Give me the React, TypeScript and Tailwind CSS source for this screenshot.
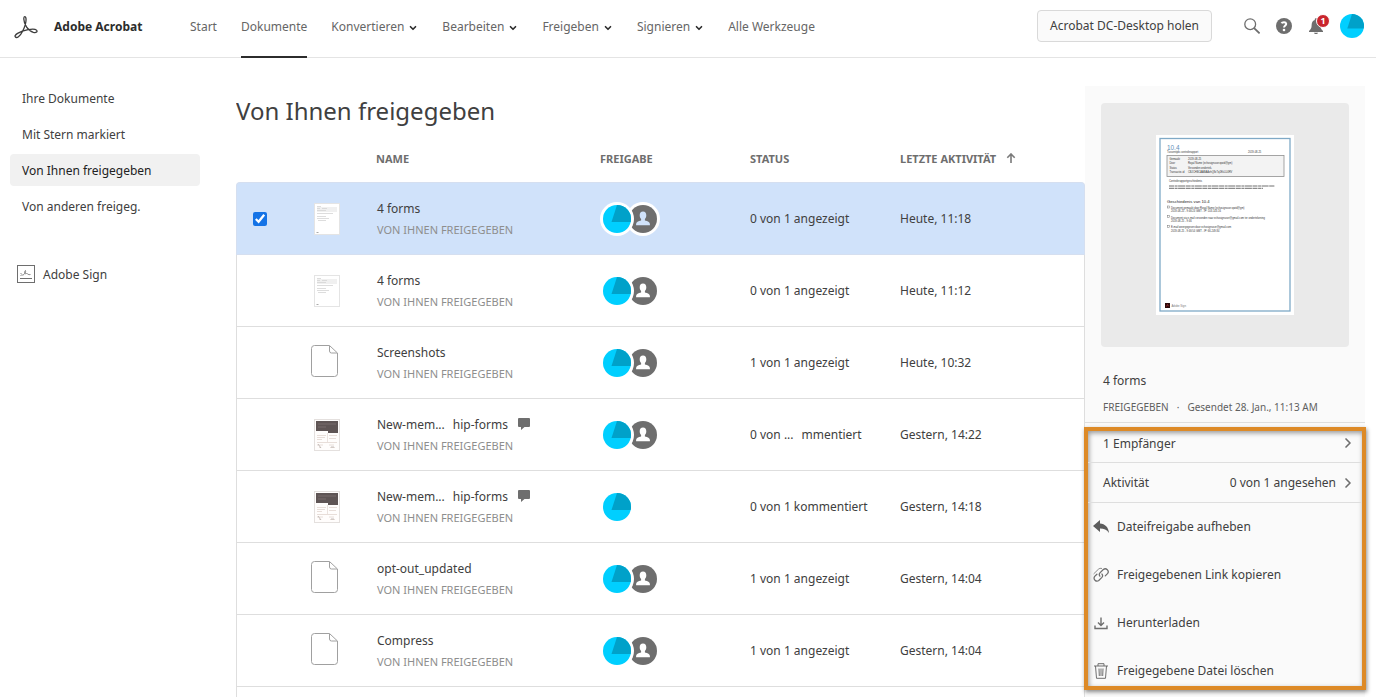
import React from "react";
import { ChevronDown, ChevronRight } from "lucide-react";

const NAV = [
  { label: "Start" },
  { label: "Dokumente", active: true },
  { label: "Konvertieren", menu: true },
  { label: "Bearbeiten", menu: true },
  { label: "Freigeben", menu: true },
  { label: "Signieren", menu: true },
  { label: "Alle Werkzeuge" },
];

const SIDE = ["Ihre Dokumente", "Mit Stern markiert", "Von Ihnen freigegeben", "Von anderen freigeg."];

type Row = {
  name: string;
  tail?: string;
  thumb: "form" | "file" | "flyer";
  people: 1 | 2;
  status: string;
  statusTail?: string;
  time: string;
  selected?: boolean;
};

const ROWS: Row[] = [
  { name: "4 forms", thumb: "form", people: 2, status: "0 von 1 angezeigt", time: "Heute, 11:18", selected: true },
  { name: "4 forms", thumb: "form", people: 2, status: "0 von 1 angezeigt", time: "Heute, 11:12" },
  { name: "Screenshots", thumb: "file", people: 2, status: "1 von 1 angezeigt", time: "Heute, 10:32" },
  { name: "New-mem...", tail: "hip-forms", thumb: "flyer", people: 2, status: "0 von ...", statusTail: "mmentiert", time: "Gestern, 14:22" },
  { name: "New-mem...", tail: "hip-forms", thumb: "flyer", people: 1, status: "0 von 1 kommentiert", time: "Gestern, 14:18" },
  { name: "opt-out_updated", thumb: "file", people: 2, status: "1 von 1 angezeigt", time: "Gestern, 14:04" },
  { name: "Compress", thumb: "file", people: 2, status: "1 von 1 angezeigt", time: "Gestern, 14:04" },
];

function AcrobatLogo() {
  return (
    <svg viewBox="0 0 24 24" className="size-6 shrink-0" fill="none" stroke="#3c3c3c" strokeWidth="1.3" strokeLinejoin="round" aria-hidden="true">
      <path d="M1.2 21.6C2.6 24 6 21.4 8.6 16.2C10.8 11.8 12.3 7 12 3.6C11.7 .9 9.7 1 9.8 4C10 9.2 14 16 19.4 17.4C22.4 18 23.9 16.6 22.5 15.1C20 12.7 9 15 3.6 18.4C1.4 19.9 .6 20.9 1.2 21.6Z" />
    </svg>
  );
}

function Avatar({ className }: { className: string }) {
  return (
    <span className={`block shrink-0 overflow-hidden rounded-full bg-[#00cfff] ${className}`}>
      <svg viewBox="0 0 28 28" className="size-full" aria-hidden="true">
        <path d="M8.5 17L14 0H28V17Z" fill="#00a1c9" />
      </svg>
    </span>
  );
}

function Person({ selected }: { selected?: boolean }) {
  return (
    <span className="-ml-0.5 block size-7 shrink-0 rounded-full bg-[#6e6e6e] ring-3 ring-white">
      <svg viewBox="0 0 28 28" className="size-full" fill={selected ? "#d0e2fa" : "#ffffff"} aria-hidden="true">
        <path d="M14 6.6C16.2 6.6 17.3 8.1 17.3 10.3C17.3 12 16.7 13.3 15.9 14.1V15.4C18.7 15.9 20.9 17.1 20.9 19.1V20.2H7.1V19.1C7.1 17.1 9.3 15.9 12.1 15.4V14.1C11.3 13.3 10.7 12 10.7 10.3C10.7 8.1 11.8 6.6 14 6.6Z" />
      </svg>
    </span>
  );
}

function Thumb({ kind }: { kind: Row["thumb"] }) {
  if (kind === "file") {
    return (
      <svg width="28" height="36" viewBox="0 0 28 36" fill="none" stroke="#a0a0a0" className="-ml-1 block" aria-hidden="true">
        <path d="M4.5 .5H19.5L27.5 8V28.5A3 3 0 0 1 24.5 31.5H4.5A3 3 0 0 1 1.5 28.5V3.5A3 3 0 0 1 4.5 .5Z" />
        <path d="M19.5 .8V6A2 2 0 0 0 21.5 8H27.2" />
      </svg>
    );
  }
  if (kind === "form") {
    return (
      <svg width="26" height="32" viewBox="0 0 26 32" className="block" aria-hidden="true">
        <rect x=".5" y=".5" width="25" height="31" fill="#fff" stroke="#e4e4e4" />
        <rect x="3" y="4" width="20" height="5" fill="#f0f0f0" />
        <path d="M3 3.5H7M3 5.5H6M8 5.5H13M3 7.5H12M3 10.5H19M3 13.5H12M3 15.5H15M4 17.5H12" stroke="#d4d4d4" strokeWidth=".8" />
        <path d="M2.5 29.5H4.5" stroke="#aaa" />
      </svg>
    );
  }
  return (
    <svg width="26" height="32" viewBox="0 0 26 32" className="block" aria-hidden="true">
      <rect x=".5" y=".5" width="25" height="31" fill="#fffdfc" stroke="#e4e0de" />
      <path d="M2 2H24V14H14V12H2Z" fill="#5f5555" />
      <path d="M4 5H22M4 8H12" stroke="#7d7171" strokeWidth=".8" />
      <path d="M3 16.5H12M15 16.5H23M3 18.5H11M15 19.5H22M3 20.5H8M3 23.5H23M3 26H9M15 26H20M5 28.5H7M16 28.5H21" stroke="#e8ded9" />
      <path d="M13.5 14V23" stroke="#ebe3df" />
      <path d="M4 25L7 29M17 28H20" stroke="#b8aeab" strokeWidth=".8" />
    </svg>
  );
}

function Preview() {
  return (
    <svg width="138" height="180" viewBox="0 0 138 180" className="block" fontFamily="'Liberation Sans', Arial, sans-serif" role="img" aria-label="Vorschau 4 forms">
      <rect width="138" height="180" fill="#fff" />
      <rect x="4" y="3.5" width="130" height="172.5" fill="none" stroke="#7fa9c6" strokeWidth="1.3" />
      <text x="11" y="14.5" fontSize="6.4" fill="#5c8fb8">10.4</text>
      <rect x="11" y="20.5" width="117" height="21" fill="#f3f3f3" stroke="#8f8f8f" strokeWidth=".8" />
      <g fontSize="2.6" fill="#333">
        <text x="11" y="18.4">Tussentijds controlerapport</text>
        <text x="92" y="18.4">2019-08-25</text>
        <text x="13.5" y="25">Gemaakt</text>
        <text x="32" y="25">2019-08-25</text>
        <text x="13.5" y="29.4">Door</text>
        <text x="32" y="29.4">Royal Name (echosignuser.qwid@gm)</text>
        <text x="13.5" y="33.8">Status</text>
        <text x="32" y="33.8">Verzonden ondertek.</text>
        <text x="13.5" y="38.3">Transactie-id</text>
        <text x="32" y="38.3">CBJCHBCAABAAzhQ8xTq1EkLU4RV</text>
        <text x="13" y="46.6">Controlerapportgeschiedenis</text>
      </g>
      <path d="M13 51H119M13 53.3H107" stroke="#6e6e6e" strokeWidth="1" strokeDasharray="5 .6 3 .5 7 .6" />
      <text x="11" y="68.4" fontSize="4.2" fill="#222">Geschiedenis van 10.4</text>
      <g fill="none" stroke="#777" strokeWidth=".5">
        <rect x="11.3" y="71" width="2" height="2" />
        <rect x="11.3" y="80.7" width="2" height="2" />
        <rect x="11.3" y="90.5" width="2" height="2" />
      </g>
      <g fontSize="2.6" fill="#333">
        <text x="15" y="73.7">Document gemaakt door Royal Name (echosignuser.qwid@gm)</text>
        <text x="15" y="77.3">2019-08-25 - 9:46:24 GMT - IP: 103.143.16</text>
        <text x="15" y="83.5">Document via e-mail verzonden naar echosignuser@gmail.com ter ondertekening</text>
        <text x="15" y="87.1">2019-08-25 - 9:46</text>
        <text x="15" y="93.3">E-mail weergegeven door echosignuser@gmail.com</text>
        <text x="15" y="96.9">2019-08-25 - 9:46:54 GMT - IP: 66.249.84</text>
      </g>
      <rect x="9" y="168" width="5" height="5" fill="#2d0a0a" />
      <path d="M10.5 171.5L11.5 169.5L12.6 171.3" stroke="#d44" strokeWidth=".5" fill="none" />
      <text x="15.5" y="171.6" fontSize="2.8" fill="#777">Adobe Sign</text>
    </svg>
  );
}

function Action({ icon, children }: { icon: React.ReactNode; children: React.ReactNode }) {
  return (
    <button type="button" className="flex h-12 items-center gap-2 pb-px pl-[5px] text-left">
      {icon}
      {children}
    </button>
  );
}

const TH = "pt-1 text-left font-bold";

export default function App() {
  return (
    <div className="flex h-screen flex-col overflow-hidden bg-white font-['Noto_Sans',sans-serif] text-xs leading-[17px] text-[#404040]">
      <header className="flex h-[58px] shrink-0 items-stretch border-b border-[#e4e4e4] pr-3">
        <a href="#" className="flex w-[190px] shrink-0 items-center gap-4 pb-1 pl-3.5 font-bold text-[#2c2c2c]">
          <AcrobatLogo />
          Adobe Acrobat
        </a>
        <nav className="flex gap-6 text-[#666666]">
          {NAV.map((n) => (
            <a key={n.label} href="#" className={`-mb-px flex items-center gap-1 border-b-2 pb-[3px] whitespace-nowrap ${n.active ? "border-[#2c2c2c]" : "border-transparent"}`}>
              {n.label}
              {n.menu && <ChevronDown className="mt-0.5 size-2.5 text-[#2c2c2c]" strokeWidth={4} />}
            </a>
          ))}
        </nav>
        <div className="ml-auto flex items-center pb-1.5">
          <button type="button" className="mr-8 h-8 rounded border border-[#d9d9d9] bg-[#fafafa] px-3 whitespace-nowrap">
            Acrobat DC-Desktop holen
          </button>
          <div className="flex items-center gap-4">
            <button type="button" aria-label="Suchen">
              <svg className="block size-4" viewBox="0 0 16 16" fill="none" stroke="#6e6e6e" strokeWidth="1.3">
                <circle cx="6.2" cy="6.2" r="5.4" />
                <path d="M10.1 10.1L15.6 15.4" strokeWidth="1.8" />
              </svg>
            </button>
            <button type="button" aria-label="Hilfe">
              <svg className="block size-4" viewBox="0 0 16 16">
                <circle cx="8" cy="8" r="8" fill="#6e6e6e" />
                <path d="M5.5 5.3C6.2 4 9.8 3.5 10.2 5.6C10.5 7.4 8 7.4 8 9.6" fill="none" stroke="#fff" strokeWidth="2" />
                <circle cx="8" cy="12" r="1.3" fill="#fff" />
              </svg>
            </button>
            <button type="button" aria-label="Benachrichtigungen" className="relative">
              <svg className="block size-4" viewBox="0 0 16 16" fill="#6e6e6e">
                <path d="M6.8 1.2C6.8 0 9.2 0 9.2 1.2V2C11.6 2.8 12.4 5 12.4 7.6C12.4 10.4 13.2 11.3 15 13V14H1V13C2.8 11.3 3.6 10.4 3.6 7.6C3.6 5 4.4 2.8 6.8 2ZM5.9 14.7H10.1C9.8 16.4 6.2 16.4 5.9 14.7Z" />
              </svg>
              <span className="absolute -top-1 left-2 flex size-3.5 items-center justify-center rounded-full border border-white bg-[#c9252d] text-[9px] leading-3 font-bold text-white">1</span>
            </button>
            <button type="button" aria-label="Konto">
              <Avatar className="size-6" />
            </button>
          </div>
        </div>
      </header>

      <div className="flex min-h-0 flex-1 pr-[11px]">
        <aside className="w-[236px] shrink-0 pt-6 pl-2.5">
          <nav className="flex w-[190px] flex-col gap-1">
            {SIDE.map((s, i) => (
              <a key={s} href="#" className={`flex h-8 items-center rounded px-3 ${i === 2 ? "bg-[#f1f1f1] text-[#222222]" : ""}`}>
                {s}
              </a>
            ))}
          </nav>
          <a href="#" className="mt-9 flex h-8 items-center gap-2 pl-[7px]">
            <svg className="size-[18px]" viewBox="0 0 18 18" fill="none" stroke="#6e6e6e" aria-hidden="true">
              <rect x=".5" y=".5" width="17" height="17" />
              <path d="M3 13.5H15" />
              <path d="M3.5 8L5 9.5L3.5 11M5.5 10.5C8 9 9 7 8.5 5.5C7 6 7.5 10 9.5 8.5C10.5 8 11 10.5 13.5 9.5" strokeWidth=".8" />
            </svg>
            Adobe Sign
          </a>
        </aside>

        <main className="min-w-0 flex-1 overflow-hidden">
          <h1 className="mt-9 h-9 text-2xl leading-[34px]">Von Ihnen freigegeben</h1>
          <table className="w-full table-fixed border-separate border-spacing-0">
            <colgroup>
              <col className="w-[75px]" />
              <col className="w-[65px]" />
              <col />
              <col className="w-[150px]" />
              <col className="w-[150px]" />
              <col className="w-[185px]" />
            </colgroup>
            <thead>
              <tr className="h-[52px] text-[11px] text-[#6e6e6e]">
                <td />
                <td />
                <th className={TH}>NAME</th>
                <th className={TH}>FREIGABE</th>
                <th className={TH}>STATUS</th>
                <th className={TH}>
                  <span className="flex items-center gap-2.5 whitespace-nowrap">
                    LETZTE AKTIVITÄT
                    <svg className="size-2.5" viewBox="0 0 10 10" fill="none" stroke="#7a7a7a" strokeWidth="1.6" aria-hidden="true">
                      <path d="M5 10V1M1.3 4.7L5 1L8.7 4.7" />
                    </svg>
                  </span>
                </th>
              </tr>
            </thead>
            <tbody>
              {ROWS.map((r, i) => {
                const c = r.selected ? "bg-[#d0e2fa] border-t border-b border-[#d5dff0]" : "border-b border-[#dedede]";
                return (
                  <tr key={i} className={r.selected ? "h-[73px]" : "h-[72px]"}>
                    <td className={`${c} border-l pl-4 ${r.selected ? "rounded-tl" : ""}`}>
                      {r.selected && <input type="checkbox" defaultChecked aria-label={r.name} className="block size-3.5 accent-[#1473e6]" />}
                    </td>
                    <td className={`${c} p-0`}>
                      <div className="pl-[3px]">
                        <Thumb kind={r.thumb} />
                      </div>
                    </td>
                    <td className={`${c} pl-px`}>
                      <div className="flex items-center gap-2 whitespace-nowrap">
                        <span>{r.name}</span>
                        {r.tail && <span>{r.tail}</span>}
                        {r.tail && (
                          <svg className="ml-0.5 h-3 w-3" viewBox="0 0 12 12" fill="#6e6e6e" aria-hidden="true">
                            <path d="M1 0H11A1 1 0 0 1 12 1V8A1 1 0 0 1 11 9H6.5L3 12V9H1A1 1 0 0 1 0 8V1A1 1 0 0 1 1 0Z" />
                          </svg>
                        )}
                      </div>
                      <div className="mt-1 text-[11px] whitespace-nowrap text-[#8e8e8e]">VON IHNEN FREIGEGEBEN</div>
                    </td>
                    <td className={c}>
                      <div className="flex pl-[3px]">
                        <Avatar className="relative z-10 size-7 ring-3 ring-white" />
                        {r.people === 2 && <Person selected={r.selected} />}
                      </div>
                    </td>
                    <td className={c}>
                      <span className="flex gap-2 whitespace-nowrap">
                        <span>{r.status}</span>
                        {r.statusTail && <span>{r.statusTail}</span>}
                      </span>
                    </td>
                    <td className={`${c} border-r whitespace-nowrap ${r.selected ? "rounded-tr" : ""}`}>{r.time}</td>
                  </tr>
                );
              })}
              <tr className="h-[72px]">
                <td colSpan={6} className="border-x border-[#dedede]" />
              </tr>
            </tbody>
          </table>
        </main>

        <aside className="mt-7 flex w-[280px] shrink-0 flex-col bg-[#fafafa]">
          <div className="mx-4 mt-[17px] flex h-[244px] shrink-0 items-center justify-center rounded bg-[#eaeaea]">
            <Preview />
          </div>
          <div className="border-b border-[#dedede] px-[18px] pt-[25px] pb-[7px]">
            <h2>4 forms</h2>
            <p className="mt-2.5 flex items-center gap-2 text-[10px] leading-4 whitespace-nowrap text-[#606060]">
              <span>FREIGEGEBEN</span>
              <span>·</span>
              <span>Gesendet 28. Jan., 11:13 AM</span>
            </p>
          </div>
          <section className="relative z-10 -mx-px mt-1 h-[263px] shrink-0 border-4 border-[#dd8a27] shadow-[1px_2px_4px_rgba(0,0,0,0.45),inset_1px_2px_5px_rgba(0,0,0,0.4)]">
            <button type="button" className="flex h-8 w-full items-center justify-between border-b border-[#dedede] pr-1.5 pb-[7px] pl-[15px]">
              1 Empfänger
              <ChevronRight className="size-4 text-[#6e6e6e]" strokeWidth={2.5} />
            </button>
            <button type="button" className="flex h-10 w-full items-center justify-between border-b border-[#dedede] pr-1.5 pl-[15px]">
              Aktivität
              <span className="flex items-center gap-1">
                0 von 1 angesehen
                <ChevronRight className="size-4 text-[#6e6e6e]" strokeWidth={2.5} />
              </span>
            </button>
            <div className="flex flex-col">
              <Action
                icon={
                  <svg className="size-4" viewBox="0 0 16 16" fill="#5c5c5c">
                    <path d="M0 7L7 1V4.6C12 5 15.6 8.4 16 14C13.8 10.8 11 9.6 7 9.6V13Z" />
                  </svg>
                }
              >
                Dateifreigabe aufheben
              </Action>
              <Action
                icon={
                  <svg className="size-4" viewBox="0 0 18 18" fill="none" stroke="#6e6e6e" strokeWidth="1.4" strokeLinecap="round">
                    <path d="M7.7 10.3A3 3 0 0 1 7.8 6.6L11.6 2.9A3.3 3.3 0 0 1 16.3 7.5L13.8 10" />
                    <path d="M10.1 7.9A3 3 0 0 1 10 11.7L6.5 15.2A3.3 3.3 0 0 1 1.9 10.6L4.4 8.1" />
                    <path d="M1 7.5L6 2.6C7 1.6 8.5 1.2 9.7 1.6" strokeWidth=".9" />
                  </svg>
                }
              >
                Freigegebenen Link kopieren
              </Action>
              <Action
                icon={
                  <svg className="size-4" viewBox="0 0 16 16" fill="none" stroke="#6e6e6e" strokeWidth="1.4">
                    <path d="M8 2.5V10M5 7.5L8 10.5L11 7.5M2 10.5V13.5H14V10.5" />
                  </svg>
                }
              >
                Herunterladen
              </Action>
              <Action
                icon={
                  <svg className="size-4" viewBox="0 0 16 16" fill="none" stroke="#6e6e6e">
                    <path d="M1 3H15M5 3V.7H11V3M2.5 3L3.5 15.3H12.5L13.5 3M6 5.5L6.3 13M8 5.5V13M10 5.5L9.7 13" />
                  </svg>
                }
              >
                Freigegebene Datei löschen
              </Action>
            </div>
          </section>
        </aside>
      </div>
    </div>
  );
}
